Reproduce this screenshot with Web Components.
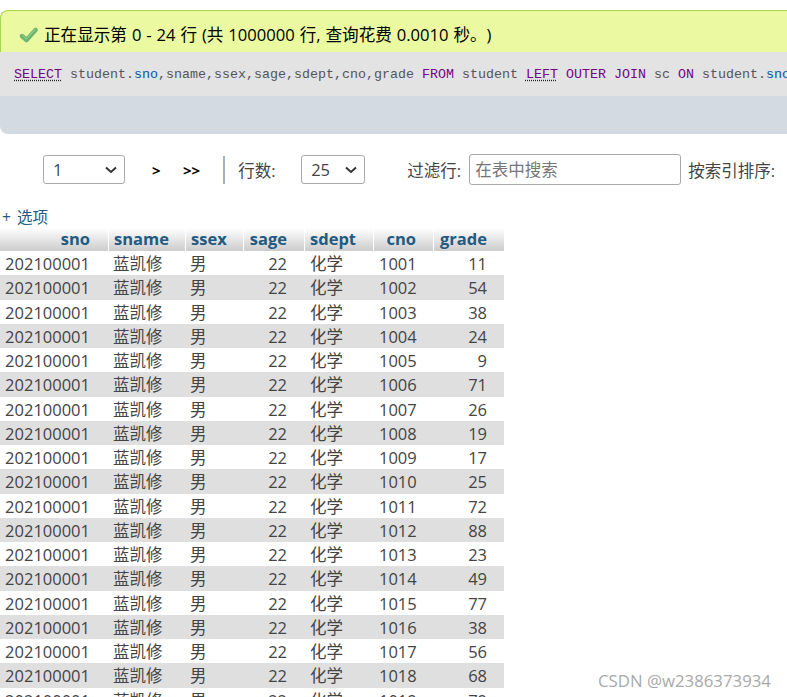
<!DOCTYPE html>
<html lang="zh">
<head>
<meta charset="utf-8">
<title>student</title>
<style>
html, body { margin: 0; height: 697px; overflow: hidden; background: #fff; }
body { font: 16.5px "Open Sans", "Noto Sans CJK SC", sans-serif; color: #444; position: relative; }
</style>
</head>
<body>
<pma-notice>正在显示第 0 - 24 行 (共 1000000 行, 查询花费 0.0010 秒。)</pma-notice>
<pma-sql></pma-sql>
<pma-nav></pma-nav>
<pma-options></pma-options>
<pma-results></pma-results>
<water-mark>CSDN @w2386373934</water-mark>

<script>
class PmaNotice extends HTMLElement {
    connectedCallback() {
        const shadowRoot = this.attachShadow({ mode: 'open' });
        shadowRoot.innerHTML = `
            <style>
                :host {
                    display: flex;
                    align-items: center;
                    gap: 6px;
                    box-sizing: border-box;
                    width: 800px;
                    height: 42px;
                    margin-top: 10px;
                    padding: 5px 0 0 18px;
                    background: #ebf9a1;
                    border: 1px solid #a6d64a;
                    border-bottom: none;
                    border-right: none;
                    border-top-left-radius: 8px;
                    color: #000;
                    font-size: 16.6px;
                    word-spacing: 0.6px;
                    text-spacing-trim: space-all;
                    font-kerning: none;
                    white-space: nowrap;
                }
                svg { flex: none; margin-top: 2px; }
            </style>
            <svg width="19" height="16" viewBox="0 0 19 16">
                <path d="M3 9 L7.5 13 L16.5 3" fill="none" stroke="#6db36d" stroke-width="4.4" stroke-linecap="round" stroke-linejoin="round"/>
                <path d="M3.5 8.5 L7.5 12 L16 2.5" fill="none" stroke="#8ccb8c" stroke-width="1.2" stroke-linecap="round"/>
            </svg>
            <slot></slot>
        `;
    }
}
customElements.define("pma-notice", PmaNotice);

class PmaSql extends HTMLElement {
    connectedCallback() {
        const shadowRoot = this.attachShadow({ mode: 'open' });
        shadowRoot.innerHTML = `
            <style>
                :host {
                    display: block;
                    width: 787px;
                }
                .code {
                    box-sizing: border-box;
                    height: 44px;
                    padding: 14px 0 0 14px;
                    background: #e3e3e3;
                    color: #555;
                    font: 13.33px/18px "Liberation Mono", monospace;
                    white-space: pre;
                    overflow: hidden;
                }
                .kw { color: #770088; }
                .doc { color: #770088; text-decoration: underline dotted #222; text-underline-offset: 2px; }
                .col { color: #0055aa; }
                .bar {
                    height: 38px;
                    background: #d3dae2;
                    border-bottom-left-radius: 8px;
                }
            </style>
            <div class="code"><span class="doc">SELECT</span> student.<span class="col">sno</span>,sname,ssex,sage,sdept,cno,grade <span class="kw">FROM</span> student <span class="doc">LEFT</span> <span class="kw">OUTER</span> <span class="kw">JOIN</span> sc <span class="kw">ON</span> student.<span class="col">sno</span></div>
            <div class="bar"></div>
        `;
    }
}
customElements.define("pma-sql", PmaSql);

class PmaNav extends HTMLElement {
    caja(valor, ancho) {
        return `<div class="sel" style="width:${ancho}px">${valor}
            <svg width="14" height="8" viewBox="0 0 14 8"><path d="M2 1.5 L7 6 L12 1.5" fill="none" stroke="#333" stroke-width="2"/></svg>
        </div>`;
    }

    connectedCallback() {
        const shadowRoot = this.attachShadow({ mode: 'open' });
        shadowRoot.innerHTML = `
            <style>
                :host {
                    display: flex;
                    align-items: center;
                    width: 787px;
                    height: 31px;
                    margin-top: 20px;
                    padding-left: 43px;
                    box-sizing: border-box;
                    white-space: nowrap;
                }
                .sel {
                    display: flex;
                    align-items: center;
                    justify-content: space-between;
                    box-sizing: border-box;
                    height: 29px;
                    padding: 0 6px 0 9px;
                    background: #fff;
                    border: 1px solid #aaa;
                    border-radius: 3px;
                    color: #444;
                }
                .go { width: 9px; color: #000; font-weight: bold; font-size: 15px; }
                .sep { width: 2px; height: 28px; background: linear-gradient(90deg, #c9a98f 50%, #9fb0c8 50%); }
                input {
                    box-sizing: border-box;
                    width: 212px;
                    height: 31px;
                    margin: 0 7px 0 8px;
                    padding: 0 5px;
                    border: 1px solid #aaa;
                    border-radius: 3px;
                    font: inherit;
                    color: #444;
                }
                input::placeholder { color: #777; opacity: 1; }
            </style>
            ${this.caja('1', 82)}
            <span class="go" style="margin-left:27px">&gt;</span>
            <span class="go" style="margin-left:22px;width:auto">&gt;&gt;</span>
            <span class="sep" style="margin-left:23px"></span>
            <span style="margin-left:13px;width:63px">行数:</span>
            ${this.caja('25', 64)}
            <span style="margin-left:42px;width:54px">过滤行:</span>
            <input placeholder="在表中搜索">
            <span>按索引排序:</span>
        `;
    }
}
customElements.define("pma-nav", PmaNav);

class PmaOptions extends HTMLElement {
    connectedCallback() {
        const shadowRoot = this.attachShadow({ mode: 'open' });
        shadowRoot.innerHTML = `
            <style>
                :host {
                    display: block;
                    height: 22px;
                    margin-top: 21px;
                    padding-left: 2px;
                    color: #235a81;
                    font-size: 15.5px;
                    line-height: 23px;
                    word-spacing: 2px;
                }
            </style>
            + 选项
        `;
    }
}
customElements.define("pma-options", PmaOptions);

class PmaResults extends HTMLElement {
    connectedCallback() {
        const notas = [11, 54, 38, 24, 9, 71, 26, 19, 17, 25, 72, 88, 23, 49, 77, 38, 56, 68, 79];
        const filas = notas.map((nota, i) => `
            <div class="fila">
                <span class="r">202100001</span><span>蓝凯修</span><span>男</span><span class="r">22</span><span>化学</span><span>${1001 + i}</span><span class="r">${nota}</span>
            </div>`).join('');

        const shadowRoot = this.attachShadow({ mode: 'open' });
        shadowRoot.innerHTML = `
            <style>
                :host {
                    display: block;
                    width: 504px;
                }
                .fila, .cab {
                    display: grid;
                    grid-template-columns: 109px 77px 58px 61px 69px 60px 70px;
                    height: 24.25px;
                    line-height: 25.5px;
                    white-space: nowrap;
                }
                .fila:nth-child(even) { background: #dfdfdf; }
                .fila span { padding: 0 5px; }
                .fila span:nth-child(2), .fila span:nth-child(3) { padding-left: 4px; }
                .fila span.r { padding-right: 18px; text-align: right; }
                .fila span.r:first-child { padding-right: 19px; }
                .fila span.r:last-child { padding-right: 17px; }
                .cab {
                    height: 23px;
                    line-height: 21.5px;
                    color: #235a81;
                    font-weight: bold;
                }
                .cab span {
                    padding: 0 5px;
                    background: linear-gradient(#fff, #ccc);
                    border-right: 1px solid #fff;
                }
                .cab span:last-child { border-right: none; }
                .cab span.r { padding-right: 17px; text-align: right; }
                .cab span.r:first-child { padding-right: 18px; }
            </style>
            <div class="cab">
                <span class="r">sno</span><span>sname</span><span>ssex</span><span class="r">sage</span><span>sdept</span><span class="r">cno</span><span class="r">grade</span>
            </div>
            <div>${filas}</div>
        `;
    }
}
customElements.define("pma-results", PmaResults);

class WaterMark extends HTMLElement {
    connectedCallback() {
        const shadowRoot = this.attachShadow({ mode: 'open' });
        shadowRoot.innerHTML = `
            <style>
                :host {
                    position: absolute;
                    left: 598px;
                    top: 671px;
                    color: #a9a9a9;
                    font: 16.8px/20px "Open Sans", sans-serif;
                    white-space: nowrap;
                }
            </style>
            <slot></slot>
        `;
    }
}
customElements.define("water-mark", WaterMark);
</script>
</body>
</html>
